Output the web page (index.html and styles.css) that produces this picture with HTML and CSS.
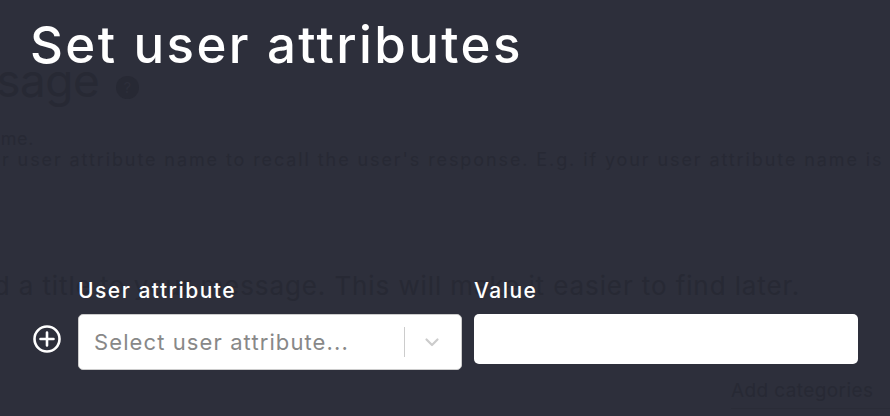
FILE: index.html
```html
<!DOCTYPE html>
<html>
<head>
  <title>Set user attributes</title>
  <link rel="stylesheet" href="styles.css">
</head>
<body>

<!-- page behind the overlay -->
<div class="page">
  <h1 class="page-title">Message <span class="help">?</span></h1>
  <p class="hint hint-top">Attribute name.</p>
  <p class="hint hint-body">Use your user attribute name to recall the user's response. E.g. if your user attribute name is email</p>
  <p class="hint hint-title">Add a title to your message. This will make it easier to find later.</p>
  <div class="categories">Add categories</div>
</div>

<!-- modal -->
<div class="modal">
  <h2>Set user attributes</h2>

  <div class="attr-row">
    <button class="add-btn" title="Add">
      <svg width="30" height="30" viewBox="0 0 30 30">
        <circle cx="15" cy="15" r="12.5" fill="none" stroke="#fff" stroke-width="2.6"/>
        <path d="M15 8.5v13M8.5 15h13" stroke="#fff" stroke-width="2.6" stroke-linecap="round"/>
      </svg>
    </button>

    <div class="field">
      <label>User attribute</label>
      <div class="select">
        <span class="placeholder">Select user attribute...</span>
        <span class="sep"></span>
        <svg class="chevron" width="20" height="20" viewBox="0 0 20 20">
          <path d="M4.5 7.5l5.5 5.5 5.5-5.5" fill="none" stroke="#ccc" stroke-width="2.2" stroke-linecap="round" stroke-linejoin="round"/>
        </svg>
      </div>
    </div>

    <div class="field">
      <label>Value</label>
      <input type="text" class="value-input">
    </div>
  </div>
</div>

</body>
</html>
```
FILE: styles.css
```css
body {
  margin: 0;
  font-family: 'Inter', sans-serif;
  background: #2d2f3b;
  width: 890px;
  height: 416px;
  overflow: hidden;
  position: relative;
}

/* faded page behind */
.page {
  color: #272934;
  margin-left: -95px;
}

.page-title {
  font-size: 46px;
  font-weight: 400;
  line-height: 56px;
  margin: 52px 0 0 0;
  letter-spacing: -0.5px;
  white-space: nowrap;
}

.help {
  display: inline-block;
  width: 23px;
  height: 23px;
  border-radius: 50%;
  background: #272934;
  color: #2d2f3b;
  font-size: 15px;
  text-align: center;
  line-height: 23px;
  vertical-align: 4px;
  letter-spacing: 0;
  margin-left: 4px;
}

.hint {
  font-size: 18px;
  margin: 0;
  white-space: nowrap;
  letter-spacing: 0.6px;
}

.hint-top {
  margin-top: 20px;
  margin-left: -10px;
}

.hint-body {
  margin-left: 14px;
  letter-spacing: 1.9px;
}

.hint-title {
  font-size: 26px;
  margin-top: 100px;
  margin-left: 53px;
  letter-spacing: 0.9px;
}

.categories {
  position: absolute;
  left: 731px;
  top: 379px;
  font-size: 19px;
  letter-spacing: 0.4px;
  width: 200px;
  padding-bottom: 6px;
  border-bottom: 1px solid #2a2c37;
}

/* modal */
.modal {
  position: absolute;
  inset: 0;
  padding: 14px 32px 0 30px;
  color: #fff;
}

.modal h2 {
  font-size: 51px;
  font-weight: 500;
  line-height: 62px;
  margin: 0;
  letter-spacing: 2.4px;
}

.attr-row {
  display: flex;
  align-items: flex-start;
  gap: 12px;
  margin-top: 202px;
}

.add-btn {
  background: none;
  border: none;
  padding: 0;
  margin: 46px 4px 0 2px;
  width: 30px;
  height: 30px;
  cursor: pointer;
}

.field {
  display: flex;
  flex-direction: column;
  gap: 10px;
  width: 384px;
}

.field label {
  font-size: 21px;
  font-weight: 500;
  line-height: 26px;
  letter-spacing: 1.5px;
}

.select {
  display: flex;
  align-items: center;
  height: 54px;
  background: #fff;
  border: 1px solid #ccc;
  border-radius: 5px;
  padding: 0 19px 0 15px;
}

.placeholder {
  flex: 1;
  color: #888;
  font-size: 22px;
  letter-spacing: 1.1px;
}

.sep {
  width: 1px;
  height: 30px;
  background: #ccc;
  margin-right: 17px;
}

.value-input {
  height: 50px;
  border: none;
  border-radius: 5px;
  padding: 0 14px;
  font-size: 20px;
  box-sizing: border-box;
}
```
